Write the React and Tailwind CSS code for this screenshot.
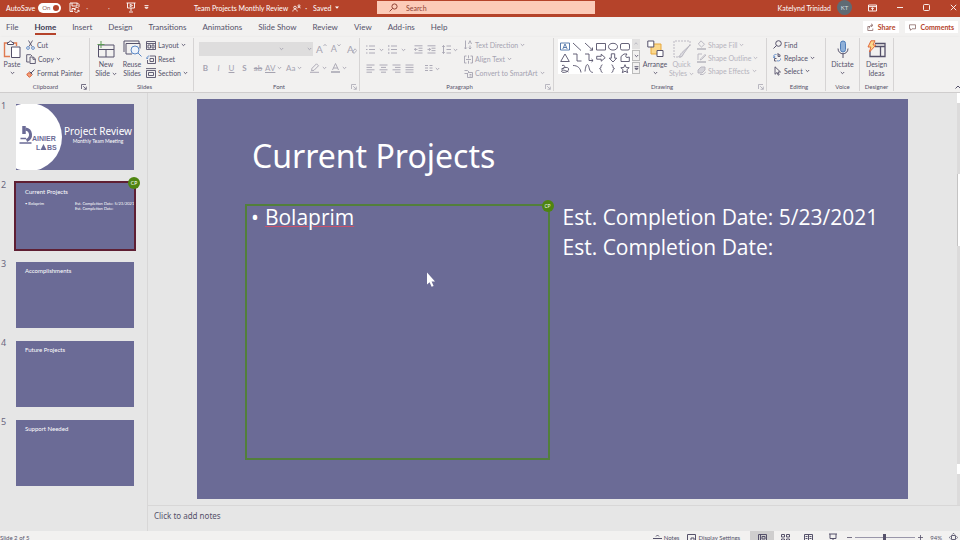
import React, { useState } from 'react';
import clsx from 'clsx';

const Icon = ({ w = 10, h = 10, box, sw = 1, className, children }) => (
  <svg width={w} height={h} viewBox={box || `0 0 ${w} ${h}`} fill="none" stroke="currentColor" strokeWidth={sw} className={clsx('shrink-0', className)} aria-hidden="true">
    {children}
  </svg>
);

const Caret = ({ className }) => (
  <Icon w={5} h={4} sw={0.9} className={className}><path d="M0.8 1l1.7 1.7L4.2 1" /></Icon>
);

const Launcher = ({ className }) => (
  <Icon w={6} h={6} sw={0.8} className={className}><path d="M0.5 5V0.5H5M2.2 2.2l3 3M5.3 2.6v2.7H2.6" /></Icon>
);

const Group = ({ label, launcher, muted, className, children }) => (
  <section aria-label={label} className={clsx('flex shrink-0 flex-col border-r border-[#d6d4d4]', className)}>
    <div className="flex flex-1 items-start">{children}</div>
    <div className="relative text-center text-[6px] leading-[8px] text-[#55516a]">
      {label}
      {launcher && <button aria-label={`${label} options`} className="absolute right-0.5 top-px"><Launcher className={muted && 'text-[#aaa8b4]'} /></button>}
    </div>
  </section>
);

const Tool = ({ icon, label, caret, className }) => (
  <button className={clsx('flex h-3.5 items-center gap-0.5 whitespace-nowrap leading-[10px]', className)}>
    {icon}
    <span>{label}</span>
    {caret && <Caret />}
  </button>
);

const BigTool = ({ icon, lines, caret, className }) => (
  <button className={clsx('flex flex-col items-center whitespace-nowrap leading-[9px]', className)}>
    <span className="flex h-[22px] items-center">{icon}</span>
    {lines.map((line, i) => (
      <span key={line} className="flex items-center gap-0.5">
        {line}
        {caret && i === lines.length - 1 && lines.length > 1 && <Caret />}
      </span>
    ))}
    {caret && lines.length === 1 && <Caret className="mt-0.5" />}
  </button>
);

const TitleBar = () => {
  const [autoSave, setAutoSave] = useState(true);
  return (
    <header className="grid h-[17px] shrink-0 grid-cols-[minmax(0,1fr)_218px_minmax(0,1fr)] items-center bg-[#b5432a] pb-0.5 pl-3 text-white">
      <div className="-ml-1.5 flex h-3 items-center">
        <label className="flex items-center gap-[3px]">
          AutoSave
          <input type="checkbox" checked={autoSave} onChange={e => setAutoSave(e.target.checked)} className="sr-only" />
          <span className="flex h-2.5 w-[23px] items-center justify-between rounded-full bg-white pl-1 pr-0.5 text-[6px] text-[#8a5a50]">
            {autoSave ? 'On' : 'Off'}
            <span className="size-1.5 rounded-full bg-[#b5432a]" />
          </span>
        </label>
        <button aria-label="Save" className="ml-2">
          <Icon w={11} h={11} sw={0.9}><path d="M1 1h7.5L10 2.5V5M1 1v8.5h3M3 1v3h5V1M3 9.5V6.500h2M9.800 6.200A2.500 2.500 0 0 0 5.500 7.500M5.300 9.200A2.500 2.500 0 0 0 9.800 8.500M5.300 6v1.700H7M10 10V8.300H8.300" /></Icon>
        </button>
        <span className="ml-1.5 opacity-70">·</span>
        <span className="ml-5 opacity-70">·</span>
        <button aria-label="Start slide show" className="ml-4">
          <Icon w={10} h={11} sw={0.9}><path d="M0.500 1h9M1.500 1v5h7V1M5 6v3M3 10h4M4.200 2.300v2.400L6.500 3.500z" /></Icon>
        </button>
        <button aria-label="Customize toolbar" className="ml-2"><Icon w={5} h={5} sw={0.9}><path d="M0.500 0.600h4M1 2.400h3L2.500 4z" /></Icon></button>
        <h1 className="ml-[45px] whitespace-nowrap">Team Projects Monthly Review</h1>
        <Icon w={9} h={8} sw={0.8} className="ml-1"><circle cx="3" cy="3.500" r="1.300" /><path d="M0.800 7.500c0-3 4.400-3 4.400 0" /><circle cx="7" cy="1.800" r="1" /><path d="M5.500 4.300c.3-1.600 2.800-1.600 3 0" /></Icon>
        <span className="ml-1">·</span>
        <button className="ml-1.5 flex items-center gap-1">Saved <Icon w={4} h={3} sw={0} className="fill-white"><path d="M0 0.500h4L2 2.700z" /></Icon></button>
      </div>
      <label className="flex h-[13px] items-center gap-2 bg-[#fccbb8] pl-3 text-[#8f4334]">
        <Icon w={9} h={9} sw={1}><circle cx="5.500" cy="3.500" r="2.600" /><path d="M3.600 5.400L0.600 8.400" /></Icon>
        <input aria-label="Search" placeholder="Search" className="w-full bg-transparent outline-none placeholder:text-[#8f4334]" />
      </label>
      <div className="flex items-center justify-end pr-[3px]">
        <span>Katelynd Trinidad</span>
        <span className="ml-1.5 flex size-[15px] items-center justify-center rounded-full bg-[#5f6b74] text-[6px] text-[#d5dde0]">KT</span>
        <button aria-label="Ribbon display" className="ml-4"><Icon w={9} h={8} sw={0.9}><path d="M0.500 1h8v6h-8zM0.500 2.600h8M4.500 6.500V3.800M3.200 5l1.300-1.300L5.800 5" /></Icon></button>
        <button aria-label="Minimize" className="ml-5"><Icon w={6} h={7} sw={0.9}><path d="M0 3.500h6" /></Icon></button>
        <button aria-label="Restore" className="ml-5"><Icon w={7} h={7} sw={0.9}><rect x="0.500" y="0.500" width="6" height="6" rx="1" /></Icon></button>
        <button aria-label="Close" className="ml-5"><Icon w={7} h={7} sw={0.9}><path d="M0.800 0.800l5.400 5.400M6.200 0.800L0.800 6.200" /></Icon></button>
      </div>
    </header>
  );
};

const TABS = ['File', 'Home', 'Insert', 'Design', 'Transitions', 'Animations', 'Slide Show', 'Review', 'View', 'Add-ins', 'Help'];

const TabRow = () => (
  <div className="flex h-5 shrink-0 items-center pl-1.5 pr-0.5">
    <nav className="flex items-center gap-4 text-[8px] leading-[12px] text-[#55516a]">
      {TABS.map(tab => (
        <a key={tab} href="#" className={clsx('relative whitespace-nowrap', tab === 'Home' && 'font-bold text-[#3d3a52]')}>
          {tab}
          {tab === 'Home' && <span className="absolute inset-x-0 -bottom-0.5 h-0.5 bg-[#b5432a]" />}
        </a>
      ))}
    </nav>
    <div className="ml-auto flex gap-1.5 font-bold text-[#b5432a]">
      <button className="flex h-3 items-center gap-1 bg-white px-1">
        <Icon w={7} h={8} sw={0.8} className="text-[#8a6a68]"><path d="M3 3.500H0.800v4h5v-2M2.300 5.300c0-2 1-3 3-3M4 0.800l2 1.500-2 1.600" /></Icon>
        Share
      </button>
      <button className="flex h-3 items-center gap-1 bg-white px-1">
        <Icon w={7} h={7} sw={0.8} className="text-[#8a6a68]"><path d="M0.500 0.800h6v4H3L1.500 6.300V4.800h-1z" /></Icon>
        Comments
      </button>
    </div>
  </div>
);

const Lines = ({ kind }) => (
  <Icon w={9} h={9} sw={0.9}>
    {kind === 'left' && <path d="M0.500 1h8M0.500 3.400h5.500M0.500 5.800h8M0.500 8.200h5.500" />}
    {kind === 'center' && <path d="M0.500 1h8M2 3.400h5M0.500 5.800h8M2 8.200h5" />}
    {kind === 'right' && <path d="M0.500 1h8M3 3.400h5.500M0.500 5.800h8M3 8.200h5.500" />}
    {kind === 'justify' && <path d="M0.500 1h8M0.500 3.400h8M0.500 5.800h8M0.500 8.200h8" />}
    {kind === 'bullets' && <path d="M0 1h1.500M3 1h6M0 4.500h1.500M3 4.500h6M0 8h1.500M3 8h6" />}
    {kind === 'numbers' && <path d="M0.800 0v2M3 1h6M0.800 3.500v2M3 4.500h6M0.800 7v2M3 8h6" />}
    {kind === 'outdent' && <path d="M0.500 0.800h8M4.500 3.200h4M4.500 5.600h4M0.500 8h8M3.500 4.400H0.500M1.800 3L0.500 4.400l1.300 1.400" />}
    {kind === 'indent' && <path d="M0.500 0.800h8M4.500 3.200h4M4.500 5.600h4M0.500 8h8M0.500 4.400h3M2.200 3l1.300 1.400-1.300 1.400" />}
    {kind === 'spacing' && <path d="M1.500 0.500v8M0.300 2l1.200-1.500L2.700 2M0.300 7l1.200 1.500L2.700 7M4.500 1H9M4.500 4.500H9M4.500 8H9" />}
    {kind === 'columns' && <path d="M1 1.500h3M1 4h3M1 6.500h3M5.500 1.500h3M5.500 4h3M5.500 6.500h3" />}
  </Icon>
);

const SHAPES = [
  'M0.500 1h9v7h-9zM2.800 7L5 2l2.200 5M3.600 5.500h2.800',
  'M1 1l8 7.500',
  'M1 1l7.500 7M8.500 5.500V8.200H5.800',
  'M0.500 1.500h9v6.500h-9z',
  'M5 1.300c6 0 6 6.800 0 6.800s-6-6.800 0-6.800z',
  'M2 1.500h6q1.500 0 1.500 1.500v3.500q0 1.500-1.500 1.500H2Q.5 8 .5 6.500V3Q.5 1.500 2 1.500z',
  'M5 1l4.300 7.500H.7z',
  'M1 1h4v7h4.500',
  'M1 1h4v6.500h4M7.500 6l1.600 1.500L7.500 9',
  'M.7 3.300h4.500V1.200l4 3.500-4 3.500V6.200H.7z',
  'M3.300.8h3.400v4.400h2L5 9 1.300 5.200h2z',
  'M1 8.500V3.500L4 1h3Q4.500 4 7 4.500L9.300 4v4.500z',
  'M2 1.500c5-1 2 4-.5 3.500 3-2 8-2.500 7 1C7.500 9 1 9 1.500 7c1-2 5 0 7 1',
  'M1 1.500c5 0 7.500 3 8 7',
  'M1 7.500C2-1 4-1 5 3.500S7 8 9 8.500',
  'M6.500.8C4 .8 6 4.600 3.500 4.600 6 4.600 4 8.500 6.500 8.500',
  'M3.500.8C6 .8 4 4.600 6.500 4.600 4 4.600 6 8.500 3.500 8.500',
  'M5 .7l1.200 2.800 3 .2-2.300 2 .8 3L5 7.200 2.300 8.700l.8-3-2.300-2 3-.2z',
];

const Ribbon = () => (
  <div className="flex h-14 shrink-0 border-b border-[#cfcdcd] py-px text-[#55516a] shadow-sm">
    <Group label="Clipboard" launcher className="w-[90px] pl-0.5">
      <BigTool
        className="w-5"
        caret
        lines={['Paste']}
        icon={<Icon w={18} h={19} sw={1}><path stroke="#e07a4f" strokeWidth="1.400" d="M7 16.500H1.500V3h3M10.500 3h3v3" /><path d="M4.500 4.500V2.500h1.500C6 .5 9 .5 9 2.500h1.500v2zM8.500 7h8.500v10.500H8.500z" className="fill-white" /></Icon>}
      />
      <div className="ml-1">
        <Tool label="Cut" icon={<Icon w={9} h={10} sw={0.9}><path d="M2.500 0.500L6 6.500M6.500 0.500L3 6.500" /><circle cx="2" cy="8" r="1.400" stroke="#5b87c5" /><circle cx="7" cy="8" r="1.400" stroke="#5b87c5" /></Icon>} />
        <Tool label="Copy" caret icon={<Icon w={10} h={10} sw={0.9}><path d="M3.500 8H.7V.7h4L6 2M4 3h3.500L9.300 5v4.500H4zM7 3v2.300h2.300" /></Icon>} />
        <Tool label="Format Painter" icon={<Icon w={9} h={9} sw={1}><path d="M8.500.6L5 4M3.500 2.500l3 3" /><path stroke="#d9572b" fill="#f2a27e" d="M3 3.500L.7 5.500 3.500 8.300 5.700 6z" /></Icon>} />
      </div>
    </Group>

    <Group label="Slides" className="w-[104px] pl-1.5">
      <BigTool
        className="w-5"
        caret
        lines={['New', 'Slide']}
        icon={<Icon w={18} h={17} sw={1}><path d="M1.500 4h15.500v12H1.500zM1.500 8.500H17M9 8.500V16" /><path stroke="#5c9a55" d="M4 0v7M.5 3.500h7" /></Icon>}
      />
      <BigTool
        className="ml-1.5 w-5"
        lines={['Reuse', 'Slides']}
        icon={<Icon w={19} h={18} sw={1}><path d="M1 12V1h15v2M3 14V3.500h14v5M3 14h6" /><circle cx="12" cy="10" r="4" stroke="#5b87c5" fill="#eef3fb" /><path stroke="#5b87c5" d="M15 13l3.500 3.500" /></Icon>}
      />
      <div className="ml-1">
        <Tool label="Layout" caret icon={<Icon w={10} h={9} sw={0.9}><path d="M.5.500h9v8h-9zM.5 2.500h9M2 4h2.500v3H2zM6 4h2v3H6z" /></Icon>} />
        <Tool label="Reset" icon={<Icon w={10} h={9} sw={0.9}><path d="M4 1h5.500v7.500h-8V5M4 3.500h3.500v3H4z" /><path stroke="#5b87c5" d="M1 3.500C1 1.500 2 1 3.500 1M0 2.500l1 1.300 1.300-1" /></Icon>} />
        <Tool label="Section" caret icon={<Icon w={10} h={10} sw={0.9}><path d="M0 .6h10M.5 2.500h9v7h-9zM2.500 4.500h5v3h-5z" /></Icon>} />
      </div>
    </Group>

    <Group label="Font" launcher muted className="w-[166px] pl-[5px] text-[#a5a3b0]">
      <div className="w-full">
        <div className="mt-1 flex items-center">
          <select aria-label="Font name" className="h-3.5 w-[86px] appearance-none bg-[#dedddd]" />
          <Caret className="-ml-1.5" />
          <select aria-label="Font size" className="ml-px h-3.5 w-7 appearance-none bg-[#dedddd]" />
          <Caret className="-ml-1.5" />
          <button className="ml-1 flex text-[10px] leading-[12px]" aria-label="Grow font">A<Icon w={4} h={4} sw={0.8}><path d="M.5 3L2 1.300 3.500 3" /></Icon></button>
          <button className="ml-1 flex text-[9px] leading-[12px]" aria-label="Shrink font">A<Icon w={4} h={4} sw={0.8}><path d="M.5 1.300L2 3l1.500-1.700" /></Icon></button>
          <button className="ml-1.5 flex items-end text-[10px] leading-[12px]" aria-label="Clear formatting">A<Icon w={5} h={7} sw={0.8} className="-ml-0.5"><path d="M3 .8l1.700 1.700L2 5.500.5 4z" /></Icon></button>
        </div>
        <div className="mt-1.5 flex items-center text-[8px] leading-[12px]">
          <button className="w-[13px] font-bold">B</button>
          <button className="w-[13px] italic">I</button>
          <button className="w-[13px] underline">U</button>
          <button className="w-[13px] font-bold">S</button>
          <button className="w-3.5 line-through">ab</button>
          <button className="flex w-[21px] items-center gap-0.5"><span className="underline">AV</span><Caret /></button>
          <button className="flex w-6 items-center gap-0.5">Aa<Caret /></button>
          <button aria-label="Highlight" className="flex items-center gap-0.5"><Icon w={10} h={10} sw={0.9}><path d="M6.500.8l2 2-4.500 4.500-2.500.5.500-2.500zM0 9.300h9" /></Icon><Caret /></button>
          <button aria-label="Font color" className="ml-1 flex items-center gap-0.5"><Icon w={9} h={10} sw={0.9}><path d="M1.500 7l3-6.500 3 6.500M2.500 5h4" /><path strokeWidth="1.500" d="M0 9h9" /></Icon><Caret /></button>
        </div>
      </div>
    </Group>

    <Group label="Paragraph" launcher muted className="w-[194px] pl-1.5 text-[#a5a3b0]">
      <div className="w-[98px]">
        <div className="mt-[7px] flex items-center gap-1">
          <button aria-label="Bullets" className="flex items-center gap-1"><Lines kind="bullets" /><Caret /></button>
          <button aria-label="Numbering" className="flex items-center gap-1"><Lines kind="numbers" /><Caret /></button>
          <button aria-label="Decrease indent" className="ml-1"><Lines kind="outdent" /></button>
          <button aria-label="Increase indent"><Lines kind="indent" /></button>
          <button aria-label="Line spacing" className="ml-0.5 flex items-center gap-0.5"><Lines kind="spacing" /><Caret /></button>
        </div>
        <div className="mt-2.5 flex items-center gap-1">
          {['left', 'center', 'right', 'justify'].map(kind => (
            <button key={kind} aria-label={`Align ${kind}`}><Lines kind={kind} /></button>
          ))}
          <button aria-label="Columns" className="ml-1.5 flex items-center gap-0.5"><Lines kind="columns" /><Caret /></button>
        </div>
      </div>
      <div>
        <Tool label="Text Direction" caret icon={<Icon w={9} h={10} sw={0.9}><path d="M1.500.5v8.500M.2 7.500L1.500 9l1.300-1.500M4.500 4L6 .7 7.500 4M6 5.500V9M4.700 7.700L6 9l1.300-1.300" /></Icon>} />
        <Tool label="Align Text" caret icon={<Icon w={9} h={9} sw={0.9}><path d="M2.500 1H.5v7h2M6.500 1h2v7h-2M2 4.500h5M4.500.3v3M4.500 5.700v3" /></Icon>} />
        <Tool label="Convert to SmartArt" caret icon={<Icon w={9} h={9} sw={0.9}><path d="M.5 1.500h3L5 3 3.500 4.500h-3M3.500 4v4.500h5v-5H5M5.500 5.500h2M5.500 7h2" /></Icon>} />
      </div>
    </Group>

    <Group label="Drawing" launcher muted className="w-[213px] pl-1">
      <div className="mt-px flex h-[35px] bg-white">
        <div className="grid grid-cols-6 gap-x-0.5 px-0.5 pt-0.5 text-[#55516a]">
          {SHAPES.map((d, i) => (
            <button key={d} aria-label={`Shape ${i + 1}`} className={clsx('h-[11px]', i === 0 && 'text-[#4a6fa5]')}><Icon sw={0.9}><path d={d} /></Icon></button>
          ))}
        </div>
        <div className="flex w-2 flex-col gap-px bg-[#f2f1f0] text-[#55516a]">
          <button aria-label="Scroll up" className="flex flex-1 items-center justify-center bg-[#e2e1e1] text-[#a5a3b0]"><Icon w={4} h={3} sw={0.7}><path d="M.5 2.200L2 .8l1.500 1.400" /></Icon></button>
          <button aria-label="Scroll down" className="flex flex-1 items-center justify-center border border-[#bbb]"><Caret /></button>
          <button aria-label="More shapes" className="flex flex-1 items-center justify-center border border-[#bbb]"><Icon w={5} h={5} sw={0.9}><path d="M.5.700h4M1 2.400h3L2.500 4z" /></Icon></button>
        </div>
      </div>
      <BigTool
        className="ml-0.5 w-[26px] text-[#55516a]"
        caret
        lines={['Arrange']}
        icon={<Icon w={17} h={18} sw={1}><path stroke="#e8a83c" fill="#fbd88c" d="M4 4h10v10H4z" /><path className="fill-white" d="M.8 1h6v6h-6zM10 10.500h6v6h-6z" /></Icon>}
      />
      <BigTool
        className="ml-px w-[25px] text-[#b5b3bd]"
        caret
        lines={['Quick', 'Styles']}
        icon={<Icon w={18} h={18} sw={0.9}><path strokeDasharray="2 1" d="M8 17H1V1h16v5" /><path fill="#dcdbe0" d="M17 5l-6 8-2 3.500c-1.500.5-3 .5-3.500.2C8 15.500 7 14 9 12.500z" /></Icon>}
      />
      <div className="ml-[3px] text-[#b5b3bd] [&>button]:h-[13px]">
        <Tool label="Shape Fill" caret icon={<Icon w={9} h={10} sw={0.9}><path d="M4 .8l3.500 3.500L4.500 7 1.300 4z" /><path strokeWidth="1.500" d="M0 9h9" /></Icon>} />
        <Tool label="Shape Outline" caret icon={<Icon w={9} h={10} sw={0.9}><path d="M5 1H1v6M8.500 1L4 5.500 3 7l1.700-.6L9 2" /><path strokeWidth="1.500" d="M0 9h9" /></Icon>} />
        <Tool label="Shape Effects" caret icon={<Icon w={9} h={9} sw={0.9}><path fill="#d5d4da" d="M1 4l3-3h4v3L5 7H1z" /><path d="M3 8.500h3L8.800 6" /></Icon>} />
      </div>
    </Group>

    <Group label="Editing" className="w-[59px] pl-1.5">
      <div className="[&>button]:h-[13px]">
        <Tool label="Find" icon={<Icon w={9} h={9} sw={1}><circle cx="5.500" cy="3.500" r="2.800" /><path d="M3.500 5.500L.5 8.500" /></Icon>} />
        <Tool label="Replace" caret icon={<Icon w={9} h={9} sw={0.9}><path stroke="#5b87c5" d="M3.500 1.500C1 1 0 3 1.500 4.500M.2 4.500h1.500V3M4 7.800C6.500 8.500 8 7 7.500 5.500" /><path d="M5 0v3.500h2V1.800H5M3.500 5.500h-2v2.500h2" /></Icon>} />
        <Tool label="Select" caret icon={<Icon w={9} h={10} sw={0.9}><path d="M2 .8v7.500l2-1.800 1.200 2.700 1-.5L5 6h2.500z" /></Icon>} />
      </div>
    </Group>

    <Group label="Voice" className="w-[34px]">
      <BigTool
        className="w-full"
        caret
        lines={['Dictate']}
        icon={<Icon w={12} h={19} sw={1}><rect x="3.500" y="1" width="5" height="11" rx="2.500" stroke="#4f7db8" fill="#8fb0d8" /><path d="M1 8.500c0 7 10 7 10 0M6 14v4" /></Icon>}
      />
    </Group>

    <Group label="Designer" className="w-[34px]">
      <BigTool
        className="w-full"
        lines={['Design', 'Ideas']}
        icon={<Icon w={19} h={18} sw={1}><path d="M8 3.500h10v13H3v-6M8 6.500h10M13.500 6.500v10" strokeWidth="1.300" /><path stroke="#e0683c" fill="#fbd88c" d="M4 .8h4L6 5h3L2.500 12l1.300-5H1z" /></Icon>}
      />
    </Group>

    <div className="flex flex-1 items-end justify-end pb-0.5">
      <button aria-label="Collapse ribbon"><Icon w={5} h={4} sw={1}><path d="M.5 3.500L3 1l2 2" /></Icon></button>
    </div>
  </div>
);

const Initials = ({ className }) => (
  <span className={clsx('absolute flex items-center justify-center rounded-full bg-[#4e8510] text-[5px] leading-none text-white', className)}>CP</span>
);

const Logo = () => (
  <svg viewBox="0 0 46 66" className="h-full w-[46px]" aria-label="Rainier Labs">
    <ellipse cx="13" cy="33" rx="33" ry="34" fill="#fff" />
    <g fill="none" stroke="#6b6b96">
      <path strokeWidth="3.500" d="M8 22v8" />
      <path strokeWidth="3" d="M9.500 25c6 1 7 9 1 11.500" />
      <path strokeWidth="1.500" d="M4.500 34.500H10M3.500 39h12" />
    </g>
    <path fill="#6b6b96" d="M27.500 40l3 6h-6z" />
    <g fill="#6b6b96" fontFamily="Liberation Sans" fontSize="7" fontWeight="bold">
      <text x="16" y="37">AINIER</text>
      <text x="20" y="46">L</text>
      <text x="31" y="46">BS</text>
    </g>
  </svg>
);

const SLIDES = [
  { title: 'Project Review', cover: true },
  { title: 'Current Projects', selected: true },
  { title: 'Accomplishments' },
  { title: 'Future Projects' },
  { title: 'Support Needed' },
];

const Thumbnails = () => (
  <aside className="w-[148px] shrink-0 border-r border-[#d8d7d7] pt-[11px]">
    <ol className="flex flex-col gap-[13px]">
      {SLIDES.map((slide, i) => (
        <li key={slide.title} className="flex">
          <span className="-mt-1 w-4 pl-px text-[9px] leading-[12px] text-[#6a6780]">{i + 1}</span>
          <div className={clsx("relative h-[66px] w-[118px] bg-[#6b6b96] font-[Lato,'Open_Sans',sans-serif] text-white", slide.selected && 'outline-2 outline-[#5f1f33]')}>
            {slide.cover ? (
              <div className="flex h-full">
                <Logo />
                <div className="flex-1 whitespace-nowrap pt-5 text-center text-[5px] leading-[7px]">
                  <p className="font-['Noto_Sans','Open_Sans',sans-serif] text-[10px] leading-[14px]">{slide.title}</p>
                  <p>Monthly Team Meeting</p>
                </div>
              </div>
            ) : (
              <div className="px-[9px] pt-1">
                <p className="text-[6px] leading-[10px]">{slide.title}</p>
                {slide.selected && (
                  <div className="mt-1 grid grid-cols-2 whitespace-nowrap text-[4px] leading-[5px]">
                    <p>• Bolaprim</p>
                    <p>Est. Completion Date: 5/23/2021<br />Est. Completion Date:</p>
                  </div>
                )}
              </div>
            )}
            {slide.selected && <Initials className="-right-1.5 -top-1.5 size-3" />}
          </div>
        </li>
      ))}
    </ol>
  </aside>
);

const Slide = () => (
  <article className="relative aspect-[16/9] w-full bg-[#6b6b96] pl-12 pr-[51px] text-white">
    <h2 className="pl-[7px] pt-[35px] text-[32px] leading-[44px]">Current Projects</h2>
    <div className="mt-[26px] grid grid-cols-2 gap-[3px] font-['Open_Sans','Noto_Sans',sans-serif] text-[21px] leading-[30px]">
      <div className="relative h-64 border-2 border-[#527f3b] pl-1">
        <ul>
          <li className="-mt-1 flex gap-1.5"><span>•</span><span className="underline decoration-[#c9526b] decoration-1 underline-offset-1">Bolaprim</span></li>
        </ul>
        <Initials className="-right-1.5 -top-1.5 size-3" />
      </div>
      <div className="-mt-0.5 whitespace-nowrap pl-[10px]">
        <p>Est. Completion Date: 5/23/2021</p>
        <p>Est. Completion Date:</p>
      </div>
    </div>
    <svg viewBox="0 0 10 16" className="absolute left-[229px] top-[173px] h-4 w-2.5" aria-hidden="true">
      <path fill="#fff" d="M1 0.500v12l2.600-2.300 2 4.600 2-.9-2-4.400H9z" />
    </svg>
  </article>
);

const ScrollBar = () => (
  <div className="flex w-[3px] shrink-0 flex-col bg-[#dcdbdb]">
    <div className="h-2.5 bg-white" />
    <div className="mt-[71px] h-[72px] border-l border-[#c4c3c3] bg-white" />
    <div className="mb-[31px] mt-auto h-2.5 bg-white" />
  </div>
);

const StatusBar = () => (
  <footer className="flex h-[9px] shrink-0 items-start overflow-hidden bg-[#f2f1f0] text-[6px] text-[#55516a]">
    <div className="flex h-[13px] w-full items-center">
      <span>Slide 2 of 5</span>
      <button className="ml-auto flex items-center gap-0.5"><Icon w={9} h={8} sw={1}><path d="M0 4.500h9M0 7h9M3 2.500L4.500 1 6 2.500" /></Icon>Notes</button>
      <button className="ml-2 flex items-center gap-0.5"><Icon w={9} h={9} sw={1}><path d="M3 7.500H.5v-6h8v6M4 5h3v3.500H4z" /></Icon>Display Settings</button>
      <button aria-label="Normal view" className="ml-2.5 flex h-full w-6 items-center justify-center bg-[#cfcece]"><Icon w={9} h={8} sw={1}><path d="M.5.500h8v7h-8zM2.500.5v7M4 2.500h3v2.500H4z" /></Icon></button>
      <button aria-label="Slide sorter" className="ml-[7px]"><Icon w={9} h={8} sw={1}><path d="M.5.500H3.500v2.500h-3zM5.500.500h3v2.500h-3zM.5 5H3.500v2.500h-3zM5.500 5h3v2.500h-3z" /></Icon></button>
      <button aria-label="Reading view" className="ml-3.5"><Icon w={9} h={8} sw={1}><path d="M.5.500h8v7h-8zM4.500.500v7M1.500 2.500h2M1.500 4.500h2M5.500 2.500h2M5.500 4.500h2" /></Icon></button>
      <button aria-label="Slide show" className="ml-4"><Icon w={8} h={9} sw={1}><path d="M0 1h8M1 1v4.500h6V1M4 5.500v3M2.500 8.500h3" /></Icon></button>
      <button aria-label="Zoom out" className="ml-2.5"><Icon w={5} h={5} sw={0.8}><path d="M0 2.500h5" /></Icon></button>
      <input type="range" aria-label="Zoom" defaultValue="48" className="ml-[3px] h-2 w-[60px] appearance-none bg-[linear-gradient(#9a97aa,#9a97aa)] bg-[length:100%_1px] bg-center bg-no-repeat [&::-webkit-slider-thumb]:h-2 [&::-webkit-slider-thumb]:w-[3px] [&::-webkit-slider-thumb]:appearance-none [&::-webkit-slider-thumb]:bg-[#55516a]" />
      <button aria-label="Zoom in" className="ml-[3px]"><Icon w={5} h={5} sw={0.8}><path d="M0 2.500h5M2.500 0v5" /></Icon></button>
      <span className="ml-[7px]">94%</span>
      <button aria-label="Fit to window" className="ml-[7px] mr-0.5"><Icon w={9} h={9} sw={0.9}><path d="M2.500 2.500h4v4h-4zM3.300 1.500L4.500.3l1.200 1.200M3.300 7.500l1.200 1.200 1.200-1.200M1.500 3.300L.3 4.500l1.200 1.200M7.500 3.300l1.200 1.200-1.200 1.200" /></Icon></button>
    </div>
  </footer>
);

const App = () => (
  <div className="flex h-screen flex-col overflow-hidden bg-[#f2f1f0] font-[Lato,'Open_Sans',sans-serif] text-[7px] leading-[10px]">
    <TitleBar />
    <TabRow />
    <Ribbon />
    <main className="flex min-h-0 flex-1 bg-[#e6e6e6] font-['Noto_Sans','Open_Sans',sans-serif]">
      <Thumbnails />
      <div className="flex min-w-0 flex-1 flex-col">
        <div className="flex min-h-0 flex-1">
          <div className="min-w-0 flex-1 px-[49px] pt-1.5"><Slide /></div>
          <ScrollBar />
        </div>
        <div className="flex h-[26px] shrink-0 items-center border-t border-[#d8d7d7] pb-1.5 pl-1.5">
          <textarea aria-label="Notes" rows={1} placeholder="Click to add notes" className="w-full resize-none bg-transparent text-[8px] leading-[12px] outline-none placeholder:text-[#55516a]" />
        </div>
      </div>
    </main>
    <StatusBar />
  </div>
);

export default App;
